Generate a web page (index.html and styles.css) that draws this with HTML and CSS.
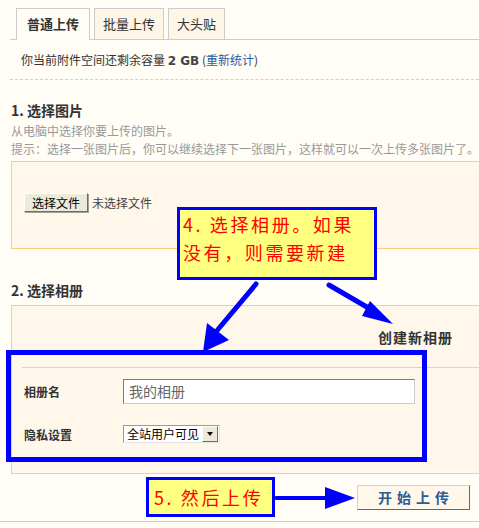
FILE: index.html
```html
<!DOCTYPE html>
<html lang="zh-CN">
<head>
  <meta charset="UTF-8">
  <title>上传图片</title>
  <link rel="stylesheet" href="styles.css">
</head>
<body>
  <div class="page">
    <div class="tabs">
      <div class="tab active">普通上传</div>
      <div class="tab">批量上传</div>
      <div class="tab">大头贴</div>
    </div>

    <div class="quota">你当前附件空间还剩余容量 <span class="size">2 GB</span> (<a href="#">重新统计</a>)</div>
    <div class="dash"></div>

    <div class="section">
      <h2>1. 选择图片</h2>
      <p class="tip">从电脑中选择你要上传的图片。</p>
      <p class="tip">提示：选择一张图片后，你可以继续选择下一张图片，这样就可以一次上传多张图片了。</p>
      <div class="box box-file">
        <span class="file-btn">选择文件</span>
        <span class="file-none">未选择文件</span>
      </div>
    </div>

    <div class="section section-album">
      <h2>2. 选择相册</h2>
      <div class="box box-album">
        <div class="album-head"><strong>创建新相册</strong></div>
        <div class="album-form">
          <div class="row">
            <label>相册名</label>
            <div class="input">我的相册</div>
          </div>
          <div class="row row-privacy">
            <label>隐私设置</label>
            <div class="select"><span class="select-text">全站用户可见</span><span class="select-arrow"></span></div>
          </div>
        </div>
      </div>
    </div>

    <div class="actions">
      <span class="upload-btn">开始上传</span>
    </div>
    <div class="foot-line"></div>
  </div>

  <!-- annotations drawn over the screenshot -->
  <div class="mark-rect"></div>
  <div class="note note-4">4. 选择相册。如果<br>没有，则需要新建</div>
  <div class="note note-5">5. 然后上传</div>
  <svg class="arrows" width="479" height="528" viewBox="0 0 479 528">
    <g fill="#0000ff" stroke="#0000ff">
      <line x1="256" y1="284" x2="215" y2="333" stroke-width="5" stroke-linecap="round"/>
      <polygon points="203,352 207,323 229,340" stroke="none"/>
      <line x1="329" y1="285" x2="372" y2="310" stroke-width="5" stroke-linecap="round"/>
      <polygon points="393,324 370,301 362,316" stroke="none"/>
      <line x1="276" y1="498" x2="327" y2="498" stroke-width="4" stroke-linecap="round"/>
      <polygon points="325,487 325,509 355,498" stroke="none"/>
    </g>
  </svg>
</body>
</html>
```

FILE: styles.css
```css
html, body { margin: 0; padding: 0; }
body {
  position: relative;
  width: 479px; height: 528px; overflow: hidden;
  background: #fffdf6;
  font-family: "Noto Sans CJK SC", "Liberation Sans", sans-serif;
  font-size: 12px; color: #333;
}
.page { padding: 8px 0 0 10px; }

/* tabs */
.tabs { display: flex; gap: 4px; height: 31px; padding-left: 6px; border-bottom: 1px solid #cccccc; }
.tab {
  height: 30px; line-height: 30px; padding: 0 8px;
  font-size: 13px; color: #333;
  background: #fdf5e6; border: 1px solid #cccccc;
}
.tab.active { padding: 0 10px; height: 31px; font-weight: bold; background: #fffdf6; border-bottom: none; }

.quota { margin-top: 10px; padding-left: 11px; line-height: 20px; }
.quota .size { font-family: "DejaVu Sans", sans-serif; font-size: 12px; font-weight: bold; color: #444; }
.quota a { color: #1f5a9c; text-decoration: none; }
.dash { margin-top: 8px; border-top: 1px dashed #cfcfcf; }

/* sections */
.section { padding-left: 1px; }
.section h2 { margin: 21px 0 3px; font-size: 14px; line-height: 18px; color: #333; }
.section-album h2 { margin: 32px 0 6px; }
.tip { margin: 0; line-height: 18px; color: #999; white-space: nowrap; }

.box { margin-right: -11px; background: #fef7ea; border: 1px solid #f8cf82; }
.box-file { margin-top: 3px; padding: 31px 12px 36px; display: flex; align-items: center; gap: 4px; }
.file-btn {
  display: inline-block; width: 62px; height: 17px; line-height: 17px; text-align: center;
  background: #ecead8; color: #000;
  border: 1px solid; border-color: #ffffff #716f64 #716f64 #ffffff;
  box-shadow: 1px 1px 0 #a0a0a0;
}
.file-none { color: #444; }

.box-album { padding: 22px 0 30px 10px; }
.album-head { display: flex; justify-content: flex-end; padding-right: 36px; font-size: 14px; line-height: 18px; letter-spacing: 1px; }
.album-form { margin-top: 21px; border-top: 1px solid #d2d6dc; padding-top: 11px; }
.row { display: flex; align-items: center; }
.row label { width: 99px; padding-left: 2px; font-weight: bold; }
.row-privacy { margin-top: 21px; }
.input {
  width: 285px; height: 23px; line-height: 23px; padding-left: 5px;
  font-size: 14px; color: #666; background: #fff;
  border: 1px solid; border-color: #7a7a7a #cccccc #cccccc #7a7a7a;
}
.select {
  display: flex; align-items: center; width: 95px; height: 16px;
  background: #fff; border: 1px solid; border-color: #9a9a9a #e6e6e6 #e6e6e6 #9a9a9a;
}
.select-text { flex: 1; padding-left: 3px; line-height: 16px; color: #000; }
.select-arrow {
  position: relative; width: 14px; height: 14px; margin-right: 1px;
  background: #ecead8; border: 1px solid; border-color: #fff #716f64 #716f64 #fff;
}
.select-arrow::after {
  content: ""; position: absolute; left: 4px; top: 5px;
  border-left: 3px solid transparent; border-right: 3px solid transparent; border-top: 4px solid #000;
}

/* bottom */
.actions { display: flex; justify-content: flex-end; padding: 11px 9px 0 0; }
.upload-btn {
  display: inline-block; height: 23px; line-height: 23px; padding: 0 15px 0 20px;
  font-size: 14px; font-weight: bold; letter-spacing: 5px; color: #2b5a94;
  background: #fef7ea; border: 1px solid; border-color: #f8cf82 #666 #666 #f8cf82;
}
.foot-line { margin: 11px 0 0 -10px; border-top: 1px solid #cccccc; }

/* annotations */
.mark-rect {
  position: absolute; left: 6px; top: 350px; width: 421px; height: 112px;
  box-sizing: border-box; border: 5px solid #0000ff;
}
.note {
  position: absolute; box-sizing: border-box;
  background: #ffff80; border: 3px solid #0000ff; color: #ff0000;
  font-size: 18px; letter-spacing: 2.6px;
}
.note-4 { left: 177px; top: 207px; width: 200px; height: 73px; padding: 0 0 0 3px; line-height: 28px; }
.note-5 { left: 146px; top: 477px; width: 129px; height: 40px; padding-left: 5px; line-height: 34px; }
.arrows { position: absolute; left: 0; top: 0; pointer-events: none; }
```
